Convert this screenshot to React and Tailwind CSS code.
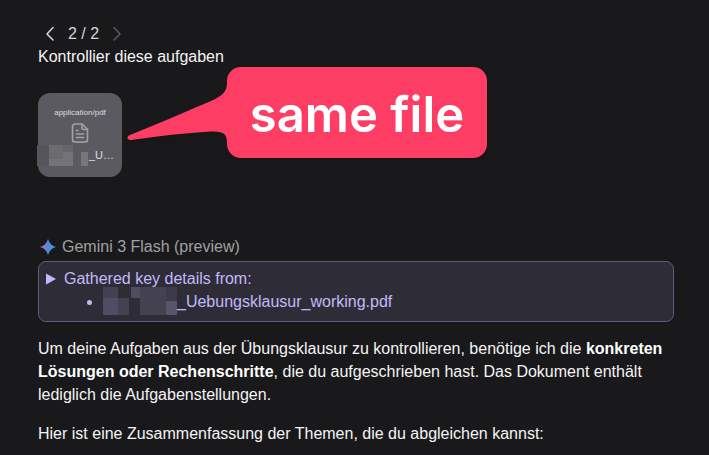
import React from 'react';

const MessagePager = () => (
    <nav aria-label="Versionen" className="flex items-center h-6 gap-2 pl-1 text-[#d6d6d8]">
        <button type="button" aria-label="Vorherige Version" className="flex items-center justify-center w-4 h-6">
            <svg width="16" height="16" viewBox="0 0 16 16" fill="none" stroke="currentColor" strokeWidth="1.5" strokeLinecap="round" strokeLinejoin="round">
                <path d="M11 2.5 5 9l6 6" />
            </svg>
        </button>
        <span className="px-0.5">2 / 2</span>
        <button type="button" aria-label="Nächste Version" disabled className="flex items-center justify-center w-4 h-6 text-[#59595e]">
            <svg width="16" height="16" viewBox="0 0 16 16" fill="none" stroke="currentColor" strokeWidth="1.5" strokeLinecap="round" strokeLinejoin="round">
                <path d="M5 2.5 11 9l-6 6" />
            </svg>
        </button>
    </nav>
);

const maskedFile = [
    { x: 0, y: 0, w: 12, h: 21, fill: '#56555b' },
    { x: 12, y: 0, w: 14, h: 14, fill: '#6c6b70' },
    { x: 26, y: 0, w: 10, h: 7, fill: '#66656b' },
    { x: 26, y: 7, w: 10, h: 14, fill: '#747378' },
    { x: 12, y: 14, w: 14, h: 7, fill: '#747378' },
    { x: 44, y: 7, w: 7, h: 14, fill: '#77767b' },
];

const maskedSource = [
    { x: 0, y: 0, w: 15, h: 11, fill: '#434150' },
    { x: 0, y: 11, w: 15, h: 17, fill: '#504d62' },
    { x: 15, y: 11, w: 11, h: 17, fill: '#444251' },
    { x: 28, y: 0, w: 9, h: 11, fill: '#504d62' },
    { x: 37, y: 0, w: 26, h: 28, fill: '#444250' },
    { x: 63, y: 0, w: 11, h: 14, fill: '#3c3a47' },
    { x: 63, y: 14, w: 11, h: 14, fill: '#57546c' },
];

const Mask = ({ cells, width, height, className }) => (
    <svg className={className} width={width} height={height} viewBox={`0 0 ${width} ${height}`} aria-hidden="true" shapeRendering="crispEdges">
        {cells.map((cell, index) => (
            <rect key={index} x={cell.x} y={cell.y} width={cell.w} height={cell.h} fill={cell.fill} />
        ))}
    </svg>
);

const Attachment = () => (
    <button type="button" className="relative flex flex-col items-center w-[84px] h-[84px] pt-3.5 rounded-xl bg-[#5b5a60] text-[#dddde0]">
        <span className="text-[8px] leading-3">application/pdf</span>
        <svg className="mt-1 text-[#a3a2a6]" width="18" height="20" viewBox="0 0 18 20" fill="none" stroke="currentColor" strokeWidth="1.6" strokeLinecap="round" strokeLinejoin="round">
            <path d="M11 1H4a2.5 2.5 0 0 0-2.5 2.5v13A2.5 2.5 0 0 0 4 19h10a2.5 2.5 0 0 0 2.5-2.5V6.5z" />
            <path d="M11 1v4a1.5 1.5 0 0 0 1.5 1.5h4M5.5 7.5H7M5.5 11h7M5.5 14.5h7" />
        </svg>
        <span className="self-end pr-2 mt-1 text-[11px] leading-4">_U…</span>
        <Mask cells={maskedFile} width={51} height={21} className="absolute -left-px top-[52px]" />
    </button>
);

const Callout = () => (
    <div className="absolute left-[89px] -top-[26px] flex drop-shadow-md">
        <svg className="w-[104px] h-[91px] -mr-1" viewBox="0 0 104 91" fill="#fd3d63" aria-hidden="true">
            <path d="M104 14H100V16C100 25 95 29 84 34C56 46 30 57 3 68C-1 69.5 0 73.5 4 73C32 69 58 66 84 64.5C97 64 100 67 100 76V77H104Z" />
        </svg>
        <p className="flex items-center justify-center w-[260px] h-[91px] pt-1 rounded-[14px] bg-[#fd3d63] text-white font-semibold text-[49px] font-['Inter',sans-serif] whitespace-nowrap">
            same file
        </p>
    </div>
);

const GeminiStar = () => (
    <svg width="18" height="18" viewBox="0 0 18 18" aria-hidden="true">
        <defs>
            <linearGradient id="star" x1="0" y1="0" x2="1" y2="0">
                <stop offset="0" stopColor="#b56aa0" />
                <stop offset="0.45" stopColor="#5c86d8" />
                <stop offset="1" stopColor="#2fa0dc" />
            </linearGradient>
        </defs>
        <path fill="url(#star)" d="M10 1Q12 7.5 18 9Q12 10.5 10 17Q8 10.5 2 9Q8 7.5 10 1Z" />
    </svg>
);

const App = () => {
    return (
        <div className="min-h-screen bg-[#19191b] text-[#f4f4f5] text-base leading-[23px] font-['Liberation_Sans',Arial,sans-serif]">
            <main className="pl-[38px] pr-[35px] pt-[21px]">
                <section>
                    <MessagePager />
                    <p>Kontrollier diese aufgaben</p>
                    <div className="relative mt-[25px]">
                        <Attachment />
                        <Callout />
                    </div>
                </section>

                <section className="mt-[58px]">
                    <h2 className="flex items-center gap-1.5 text-[#a0a0a3]">
                        <GeminiStar />
                        Gemini 3 Flash (preview)
                    </h2>
                    <details className="mt-[3px] mb-[15px] px-[7px] pt-[5px] pb-2 rounded-lg border border-[#5e5b77] bg-[#2e2d37] text-[#c4b9f8]">
                        <summary className="flex items-start gap-2 list-none cursor-pointer">
                            <svg className="mt-1.5 shrink-0" width="10" height="12" viewBox="0 0 10 12" fill="currentColor" aria-hidden="true">
                                <path d="M0 0.5 10 6 0 11.5z" />
                            </svg>
                            <div>
                                Gathered key details from:
                                <ul className="pl-[39px] list-disc">
                                    <li className="h-[23px] whitespace-nowrap">
                                        <Mask cells={maskedSource} width={74} height={28} className="inline-block align-baseline -my-2" />
                                        _Uebungsklausur_working.pdf
                                    </li>
                                </ul>
                            </div>
                        </summary>
                    </details>
                    <p className="mb-4">
                        Um deine Aufgaben aus der Übungsklausur zu kontrollieren, benötige ich die{' '}
                        <strong className="font-bold text-white">konkreten Lösungen oder Rechenschritte</strong>, die du
                        aufgeschrieben hast. Das Dokument enthält lediglich die Aufgabenstellungen.
                    </p>
                    <p>Hier ist eine Zusammenfassung der Themen, die du abgleichen kannst:</p>
                </section>
            </main>
        </div>
    );
};

export default App;
